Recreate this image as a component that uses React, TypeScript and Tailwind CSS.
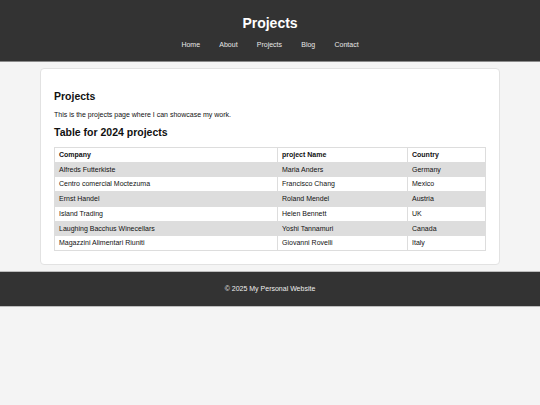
import React from "react";

const rows = [
  ["Alfreds Futterkiste", "Maria Anders", "Germany"],
  ["Centro comercial Moctezuma", "Francisco Chang", "Mexico"],
  ["Ernst Handel", "Roland Mendel", "Austria"],
  ["Island Trading", "Helen Bennett", "UK"],
  ["Laughing Bacchus Winecellars", "Yoshi Tannamuri", "Canada"],
  ["Magazzini Alimentari Riuniti", "Giovanni Rovelli", "Italy"],
];

export default function App() {
  return (
    <div className="min-h-[405px] bg-[#f4f4f4] font-['Liberation_Sans',Arial,sans-serif] text-[#111111]">
      <header className="h-[62px] bg-[#333333] border-b border-[#8a8a8a] flex flex-col items-center text-white">
        <h1 className="mt-[15px] text-[14px] leading-[16px] font-bold">Projects</h1>
        <nav className="mt-[10px] flex text-[7px] leading-[8px] text-[#e8e8e8]">
          <a className="mx-[9.6px]">Home</a>
          <a className="mx-[9.6px]">About</a>
          <a className="mx-[9.6px]">Projects</a>
          <a className="mx-[9.6px]">Blog</a>
          <a className="mx-[9.6px]">Contact</a>
        </nav>
      </header>
      <main className="mx-[40px] mt-[6px] w-[460px] bg-white rounded-[4px] border border-[#e2e2e2] px-[13px] pt-[21px] pb-[13px]">
        <h2 className="text-[10.5px] leading-[12px] font-bold">Projects</h2>
        <p className="mt-[9px] text-[7px] leading-[8px]">This is the projects page where I can showcase my work.</p>
        <h3 className="mt-[7px] text-[10.5px] leading-[12px] font-bold">Table for 2024 projects</h3>
        <table className="mt-[9px] w-[432px] border-collapse text-[7px] leading-[7.7px]">
          <thead>
            <tr className="bg-white">
              <th className="w-[223px] border border-[#dddddd] px-[4px] py-[3px] text-left font-bold">Company</th>
              <th className="w-[130px] border border-[#dddddd] px-[4px] py-[3px] text-left font-bold">project Name</th>
              <th className="border border-[#dddddd] px-[4px] py-[3px] text-left font-bold">Country</th>
            </tr>
          </thead>
          <tbody>
            {rows.map((r, i) => (
              <tr key={i} className={i % 2 === 0 ? "bg-[#dddddd]" : "bg-white"}>
                {r.map((c, j) => (
                  <td key={j} className="border border-[#dddddd] px-[4px] py-[3px] text-left">{c}</td>
                ))}
              </tr>
            ))}
          </tbody>
        </table>
      </main>
      <footer className="mt-[6px] h-[36px] bg-[#333333] border-y border-[#bdbdbd] flex items-center justify-center text-[7px] leading-[8px] text-[#eeeeee]">
        © 2025 My Personal Website
      </footer>
    </div>
  );
}
